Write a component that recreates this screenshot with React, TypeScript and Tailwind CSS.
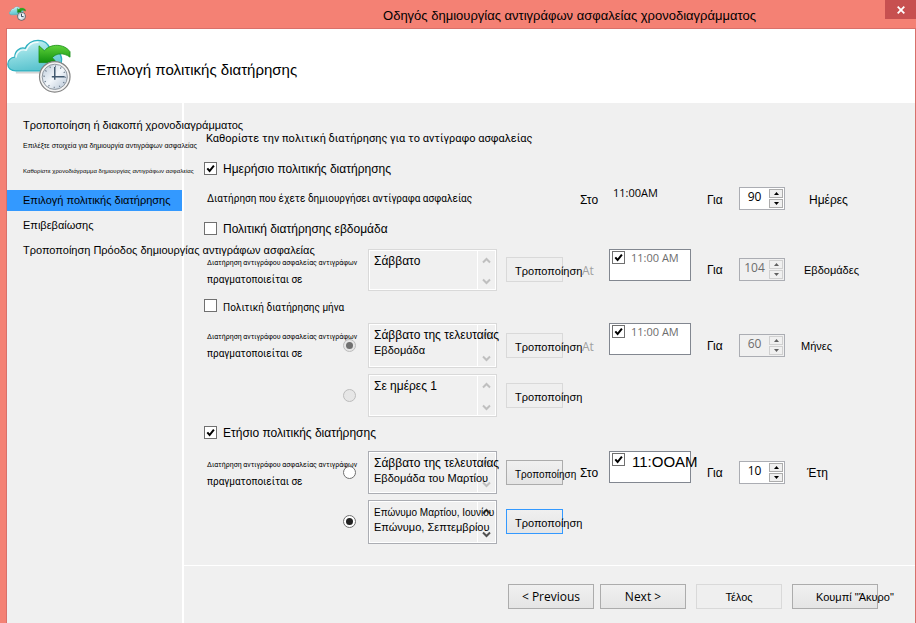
import React, { useState } from 'react';

const FONT = "font-['Liberation_Sans',Arial,sans-serif]";
const SEGOE = "font-['Open_Sans','Noto_Sans',sans-serif]";
const NARROW = "font-['Roboto','Liberation_Sans',sans-serif]";

function BackupIcon({ id, className, bold }: { id: string; className: string; bold?: boolean }) {
  const rim = bold ? '#4a5158' : '#848484';
  const hand = bold ? '#22384f' : '#41586f';
  return (
    <svg viewBox="0 0 66 54" className={className} aria-hidden="true">
      <defs>
        <linearGradient id={id + 'c'} x1="0" y1="0" x2="0.3" y2="1">
          <stop offset="0" stopColor="#d8f6f8" />
          <stop offset="0.5" stopColor="#8fdce2" />
          <stop offset="1" stopColor="#5cc4cf" />
        </linearGradient>
        <linearGradient id={id + 'g'} x1="0" y1="0" x2="0" y2="1">
          <stop offset="0" stopColor={bold ? '#3cb52a' : '#5fd23a'} />
          <stop offset="1" stopColor={bold ? '#0a780c' : '#119010'} />
        </linearGradient>
        <linearGradient id={id + 'w'} x1="0" y1="0" x2="1" y2="1">
          <stop offset="0" stopColor="#b9c8d8" />
          <stop offset="0.5" stopColor="#f3f7fb" />
          <stop offset="1" stopColor="#b4c3d4" />
        </linearGradient>
      </defs>
      <path d="M9 33.600h40" stroke="#b9b9b9" strokeWidth="2" fill="none" opacity=".6" />
      <path
        d="M9 32C4 32 .8 29 .8 25.300c0-4 3-7 7.200-7.300C7.600 12 13 7.500 18.500 9 20.500 4 26 1 31.500 1 37.500 1 42 4.500 43.500 9.500 50 9 55 14 55.500 20c.3 6-3 12-9 12z"
        fill={`url(#${id}c)`}
        stroke="#2fb0c0"
        strokeWidth="1.300"
      />
      <path d="M9 18.500C9 13 14 9.500 19.500 11 22 5 27 2.500 32 3" stroke="#fff" strokeWidth="1.400" fill="none" opacity=".8" />
      <path
        d="M32.500 6.500 38 11.500C44 4 58 4 64 12.500L64 18C57 13 50 14 46 18.500L50.500 23.500 32.500 23.500z"
        fill={`url(#${id}g)`}
        stroke="#168c16"
        strokeWidth=".8"
      />
      <circle cx="48.500" cy="38" r="15.500" fill="#f4f4f4" stroke={rim} strokeWidth={bold ? 3.5 : 1.2} />
      <circle cx="48.500" cy="38" r="12.800" fill={`url(#${id}w)`} stroke="#8e969e" strokeWidth="1" />
      {!bold && <circle cx="48.500" cy="38" r="10.800" fill="none" stroke="#6b7a8a" strokeWidth="1.600" strokeDasharray="1 4.650" />}
      <path d={bold ? 'M48.500 28v11h8' : 'M48.500 28v13M45.500 38h13'} stroke={hand} strokeWidth={bold ? 3.5 : 1.5} fill="none" />
    </svg>
  );
}

function Tick({ label, checked = false }: { label: string; checked?: boolean }) {
  return (
    <span className="relative block size-[13px] shrink-0">
      <input
        type="checkbox"
        aria-label={label}
        defaultChecked={checked}
        className="peer block size-[13px] appearance-none border border-[#707070] bg-white"
      />
      <svg viewBox="0 0 13 13" className="pointer-events-none absolute inset-0 hidden size-[13px] peer-checked:block">
        <path d="M3.300 6.400 5.600 9 9.900 3.600" fill="none" stroke="#000" strokeWidth="2" />
      </svg>
    </span>
  );
}

function Radio({ name, label, checked, disabled }: { name: string; label: string; checked?: boolean; disabled?: boolean }) {
  return (
    <span className="relative block size-[13px]">
      <input
        type="radio"
        name={name}
        aria-label={label}
        defaultChecked={checked}
        disabled={disabled}
        className="peer block size-[13px] appearance-none rounded-full border border-[#707070] bg-white disabled:border-[#bcbcbc] disabled:bg-[#e6e6e6]"
      />
      <span className="pointer-events-none absolute inset-[3px] hidden rounded-full bg-[#222] peer-checked:block peer-disabled:bg-[#707070]" />
    </span>
  );
}

function Chevron({ up, color }: { up?: boolean; color: string }) {
  return (
    <svg viewBox="0 0 9 7" className="block h-[7px] w-[9px]" aria-hidden="true">
      <path d={up ? 'M1 5.500 4.500 2 8 5.500' : 'M1 1.500 4.500 5 8 1.500'} fill="none" stroke={color} strokeWidth="2" />
    </svg>
  );
}

type Line = { text: string; size: string };
type ListProps = { label: string; lines: Line[]; height: string; active?: boolean; dark?: boolean };

function ListBox({ label, lines, height, active, dark }: ListProps) {
  const color = dark ? '#505050' : '#bfbfbf';
  return (
    <div className={`relative w-[129px] border ${height} ${active ? 'border-[#abadb3]' : 'border-[#d9d9d9]'}`}>
      <div className="absolute inset-y-0 right-0 flex w-[19px] flex-col items-center justify-between border-x border-white pb-[5px] pt-[7px]">
        <button type="button" aria-label="Πάνω"><Chevron up color={color} /></button>
        <button type="button" aria-label="Κάτω"><Chevron color={color} /></button>
      </div>
      <ul role="listbox" aria-label={label} className="pointer-events-none relative h-full border border-white pl-1 pt-[3px]">
        {lines.map((line) => (
          <li key={line.text} role="option" aria-selected="false" className={`whitespace-nowrap leading-[15px] ${line.size}`}>
            {line.text}
          </li>
        ))}
      </ul>
    </div>
  );
}

function ModifyButton({ look, small }: { look: 'off' | 'on' | 'focus'; small?: boolean }) {
  const styles = {
    off: 'border-[#d9d9d9] bg-[#efefef]',
    on: 'border-[#acacac] bg-linear-to-b from-[#f0f0f0] to-[#e5e5e5]',
    focus: 'border-[#3399ff] bg-linear-to-b from-[#f0f0f0] to-[#e5e5e5]',
  };
  return (
    <button
      type="button"
      className={`flex h-[25px] w-[57px] items-center whitespace-nowrap border pl-[8px] pt-[3px] text-black ${small ? 'text-[10px]' : 'text-[11px]'} ${styles[look]}`}
    >
      Τροποποίηση
    </button>
  );
}

function Spinner({ label, initial, disabled }: { label: string; initial: number; disabled?: boolean }) {
  const [value, setValue] = useState(initial);
  const edge = disabled ? 'border-[#d0d0d0] text-[#606060]' : 'border-[#acacac] text-black';
  const stepper = `flex h-[9px] w-[14px] items-center justify-center border bg-[#f0f0f0] ${edge}`;
  return (
    <div className={`flex h-[23px] w-[46px] items-start border border-[#abadb3] ${disabled ? 'bg-[#f0f0f0]' : 'bg-white'}`}>
      <input
        aria-label={label}
        value={value}
        disabled={disabled}
        onChange={(e) => setValue(Number(e.target.value) || 0)}
        className={`h-[18px] w-[29px] bg-transparent text-center text-[12px] leading-[18px] outline-none ${SEGOE} ${disabled ? 'text-[#6d6d6d]' : 'text-black'}`}
      />
      <div className="flex flex-col gap-px pt-px">
        <button type="button" aria-label="Αύξηση" disabled={disabled} onClick={() => setValue(value + 1)} className={stepper}>
          <svg viewBox="0 0 5 3" className="h-[3px] w-[5px]"><path d="M0 3 2.500 0 5 3z" fill="currentColor" /></svg>
        </button>
        <button type="button" aria-label="Μείωση" disabled={disabled} onClick={() => setValue(value - 1)} className={stepper}>
          <svg viewBox="0 0 5 3" className="h-[3px] w-[5px]"><path d="M0 0 2.500 3 5 0z" fill="currentColor" /></svg>
        </button>
      </div>
    </div>
  );
}

function TimeBox({ label, value, large }: { label: string; value: string; large?: boolean }) {
  return (
    <div className="flex h-[32px] w-[82px] items-start gap-[4px] border border-[#828790] bg-white pl-[2px] pt-px">
      <Tick label={label} checked />
      <input
        aria-label={label}
        defaultValue={value}
        className={`shrink-0 bg-transparent outline-none ${large ? 'h-[18px] w-[72px] pl-[3px] text-[15px] leading-[18px] text-black' : `h-[14px] w-[58px] pl-[2px] text-[11px] leading-[14px] text-[#6d6d6d] ${SEGOE}`}`}
      />
    </div>
  );
}

const GRID = 'grid grid-cols-[138px_26px_138px_74px_29px_98px_32px_62px_1fr] items-start pl-[20px]';

function PolicyTick({ text, checked, small }: { text: string; checked?: boolean; small?: boolean }) {
  return (
    <label className="flex h-[19px] items-center gap-[6px] pl-[20px]">
      <Tick label={text} checked={checked} />
      <span className={small ? `pt-[3px] text-[10px] ${NARROW}` : 'text-[12px]'}>{text}</span>
    </label>
  );
}

function KeepLabel() {
  return (
    <p className={`whitespace-nowrap pl-[3px] pt-[5px] ${NARROW}`}>
      <span className="block text-[7px] leading-[18px]">Διατήρηση αντιγράφου ασφαλείας αντιγράφων</span>
      <span className="block text-[10px] leading-4">πραγματοποιείται σε</span>
    </p>
  );
}

type RowProps = {
  drop: string;
  radio?: React.ReactNode;
  list: React.ReactNode;
  button: React.ReactNode;
  at?: string;
  atMuted?: boolean;
  time?: React.ReactNode;
  spinner?: React.ReactNode;
  unit?: string;
  unitStyle?: string;
};

function Row({ drop, radio, list, button, at, atMuted, time, spinner, unit, unitStyle = '' }: RowProps) {
  return (
    <div className={GRID}>
      {unit ? <KeepLabel /> : <span />}
      <div className={drop}><div className="pl-px pt-[6px]">{radio}</div></div>
      {list}
      <div className={drop}>{button}</div>
      {at && (
        <>
          <span className={`text-[12px] leading-[27px] ${drop} ${atMuted ? 'pl-[2px] text-[#a0a0a0] ' + SEGOE : ''}`}>{at}</span>
          {time}
          <span className={`text-[12px] leading-[27px] ${drop}`}>Για</span>
          <div className={drop}><div className="pt-px">{spinner}</div></div>
          <span className={`leading-[27px] ${drop} ${unitStyle}`}>{unit}</span>
        </>
      )}
    </div>
  );
}

const NAV = [
  { text: 'Τροποποίηση ή διακοπή χρονοδιαγράμματος', style: 'text-[11px] leading-5' },
  { text: 'Επιλέξτε στοιχεία για δημιουργία αντιγράφων ασφαλείας', style: 'text-[7px] leading-3' },
  { text: 'Καθορίστε χρονοδιάγραμμα δημιουργίας αντιγράφων ασφαλείας', style: 'text-[6px] leading-3' },
  { text: 'Επιλογή πολιτικής διατήρησης', style: 'text-[11px] leading-5 bg-[#3399ff]' },
  { text: 'Επιβεβαίωσης', style: 'text-[11px] leading-5' },
  { text: 'Τροποποίηση Πρόοδος δημιουργίας αντιγράφων ασφαλείας', style: 'text-[11px] leading-5' },
];

export default function App() {
  const footerButton = 'h-[25px] w-[86px] whitespace-nowrap border';
  const raised = 'border-[#acacac] bg-linear-to-b from-[#f0f0f0] to-[#e5e5e5]';
  return (
    <div className={`flex min-h-screen flex-col bg-[#f48174] text-black ${FONT}`}>
      <header className="flex h-[28px] items-start pl-[9px]">
        <BackupIcon id="s" bold className="mt-[6px] h-[15px] w-[17px]" />
        <h1 className="flex-1 whitespace-nowrap pl-[228px] pt-[6px] text-center text-[13px] leading-5">
          Οδηγός δημιουργίας αντιγράφων ασφαλείας χρονοδιαγράμματος
        </h1>
        <button type="button" aria-label="Κλείσιμο" className="flex h-[19px] w-[31px] items-center justify-center bg-[#c75050]">
          <svg viewBox="0 0 8 8" className="size-[8px]"><path d="M.7.7 7.300 7.300M7.300.7.7 7.300" stroke="#fff" strokeWidth="1.800" /></svg>
        </button>
      </header>
      <div className="ml-[6px] flex flex-1 flex-col border-l border-r border-t border-[#d9706a] bg-[#f0f0f0]">
        <div className="flex h-[74px] items-start bg-white">
          <BackupIcon id="b" className="mt-[10px] h-[54px] w-[65px]" />
          <h2 className="pl-[24px] pt-[31px] text-[15px] leading-5">Επιλογή πολιτικής διατήρησης</h2>
        </div>
        <div className="flex flex-1">
          <nav className="w-[177px] shrink-0 border-r-2 border-white pt-[12px]">
            <ul className="flex flex-col gap-1">
              {NAV.map((item) => (
                <li key={item.text} className={`h-[21px] whitespace-nowrap pl-[16px] ${item.style}`}>
                  <a href="#" className="relative z-10 block">{item.text}</a>
                </li>
              ))}
            </ul>
          </nav>
          <main className="min-w-0 flex-1 pt-[26px]">
            <p className={`mb-[10px] whitespace-nowrap pl-[22px] text-[11px] leading-5 ${NARROW}`}>
              Καθορίστε την πολιτική διατήρησης για το αντίγραφο ασφαλείας
            </p>

            <section className="mb-2 flex flex-col gap-[9px]">
              <PolicyTick text="Ημερήσιο πολιτικής διατήρησης" checked />
              <div className={GRID + ' h-6 text-[12px] leading-[26px]'}>
                <span className={`col-span-4 pl-[3px] text-[10px] leading-[23px] ${NARROW}`}>Διατήρηση που έχετε δημιουργήσει αντίγραφα ασφαλείας</span>
                <span>Στο</span>
                <span className={`pl-[4px] text-[11px] leading-[11px] ${SEGOE}`}>11:00AM</span>
                <span>Για</span>
                <Spinner label="Ημέρες" initial={90} />
                <span className="pl-[8px]">Ημέρες</span>
              </div>
            </section>

            <section className="mb-[5px] flex flex-col gap-[11px]">
              <PolicyTick text="Πολιτική διατήρησης εβδομάδα" />
              <Row
                drop="pt-[8px]"
                list={<ListBox label="Ημέρα εβδομάδας" lines={[{ text: 'Σάββατο', size: 'text-[12px]' }]} height="h-[42px]" />}
                button={<ModifyButton look="off" />}
                at="At"
                atMuted
                time={<TimeBox label="Ώρα εβδομάδας" value="11:00 AM" />}
                spinner={<Spinner label="Εβδομάδες" initial={104} disabled />}
                unit="Εβδομάδες"
                unitStyle="pl-[3px] text-[11px]"
              />
            </section>

            <section className="mb-[6px] flex flex-col gap-2">
              <PolicyTick text="Πολιτική διατήρησης μήνα" small />
              <div className="flex flex-col gap-[6px]">
                <Row
                  drop="pt-[10px]"
                  radio={<Radio name="month" label="Εβδομάδα μήνα" checked disabled />}
                  list={
                    <ListBox
                      label="Εβδομάδα μήνα"
                      lines={[{ text: 'Σάββατο της τελευταίας', size: 'text-[12px]' }, { text: 'Εβδομάδα', size: 'text-[11px]' }]}
                      height="h-[45px]"
                    />
                  }
                  button={<ModifyButton look="off" />}
                  at="At"
                  atMuted
                  time={<TimeBox label="Ώρα μήνα" value="11:00 AM" />}
                  spinner={<Spinner label="Μήνες" initial={60} disabled />}
                  unit="Μήνες"
                  unitStyle="text-[11px]"
                />
                <Row
                  drop="pt-[9px]"
                  radio={<Radio name="month" label="Ημέρες μήνα" disabled />}
                  list={<ListBox label="Ημέρες μήνα" lines={[{ text: 'Σε ημέρες 1', size: 'text-[12px]' }]} height="h-[43px]" />}
                  button={<ModifyButton look="off" />}
                />
              </div>
            </section>

            <section className="mb-[21px] flex flex-col gap-[9px]">
              <PolicyTick text="Ετήσιο πολιτικής διατήρησης" checked />
              <div className="flex flex-col gap-[6px]">
                <Row
                  drop="pt-[9px]"
                  radio={<Radio name="year" label="Εβδομάδα έτους" />}
                  list={
                    <ListBox
                      label="Εβδομάδα έτους"
                      lines={[{ text: 'Σάββατο της τελευταίας', size: 'text-[12px]' }, { text: 'Εβδομάδα του Μαρτίου', size: 'text-[11px]' }]}
                      height="h-[43px]"
                      active
                    />
                  }
                  button={<ModifyButton look="on" small />}
                  at="Στο"
                  time={<TimeBox label="Ώρα έτους" value="11:OOAM" large />}
                  spinner={<Spinner label="Έτη" initial={10} />}
                  unit="Έτη"
                  unitStyle="pl-[6px] text-[12px]"
                />
                <Row
                  drop="pt-[9px]"
                  radio={<Radio name="year" label="Μήνες έτους" checked />}
                  list={
                    <ListBox
                      label="Μήνες έτους"
                      lines={[{ text: 'Επώνυμο Μαρτίου, Ιουνίου', size: 'text-[10px]' }, { text: 'Επώνυμο, Σεπτεμβρίου', size: 'text-[11px]' }]}
                      height="h-[44px]"
                      active
                      dark
                    />
                  }
                  button={<ModifyButton look="focus" />}
                />
              </div>
            </section>

            <footer className="flex justify-end border-t border-white pb-[14px] pr-[37px] pt-[18px]">
              <button type="button" className={`${footerButton} ${raised} ${SEGOE} mr-[6px] text-[12px]`}>&lt; Previous</button>
              <button type="button" className={`${footerButton} ${raised} ${SEGOE} mr-[10px] text-[12px]`}>Next &gt;</button>
              <button type="button" className={`${footerButton} mr-[10px] border-[#d9d9d9] bg-[#efefef] pt-[2px] text-[11px]`}>Τέλος</button>
              <button type="button" className={`${footerButton} ${raised} flex items-center pl-[23px] pt-[2px] text-[11px]`}>Κουμπί "Άκυρο"</button>
            </footer>
          </main>
        </div>
      </div>
    </div>
  );
}
